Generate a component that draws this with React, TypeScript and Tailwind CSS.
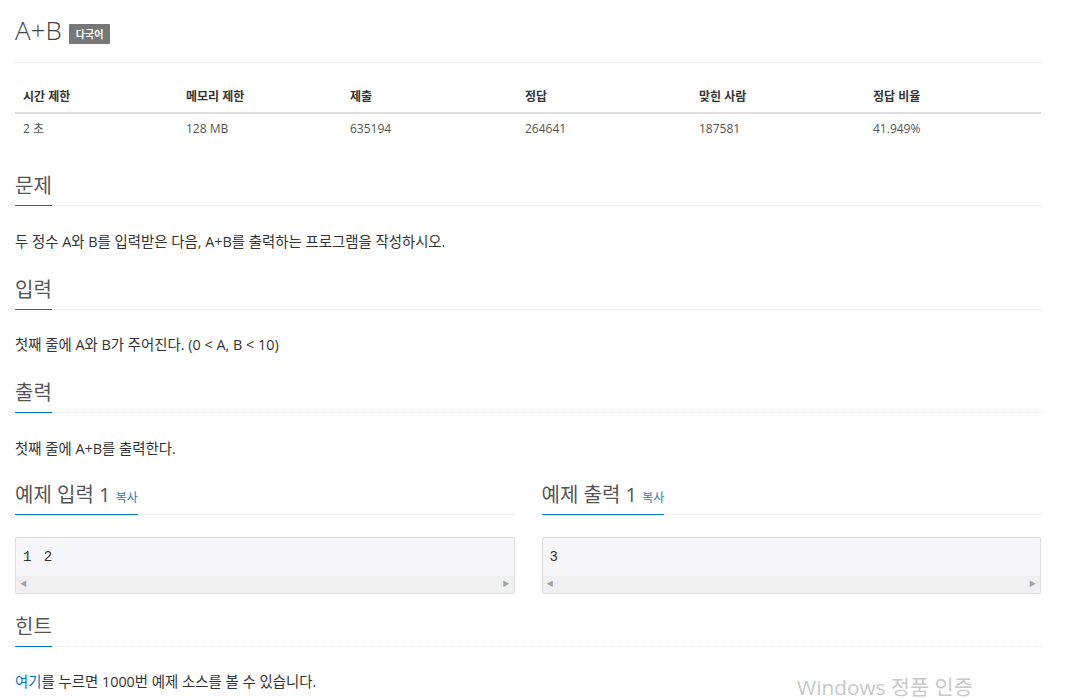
const font = "font-['Open_Sans','Noto_Sans_CJK_KR',sans-serif]";

const stats = [
  { label: "시간 제한", value: "2 초", w: "w-[163px]" },
  { label: "메모리 제한", value: "128 MB", w: "w-[164px]" },
  { label: "제출", value: "635194", w: "w-[175px]" },
  { label: "정답", value: "264641", w: "w-[174px]" },
  { label: "맞힌 사람", value: "187581", w: "w-[174px]" },
  { label: "정답 비율", value: "41.949%", w: "w-[176px]" },
];

function Headline({ children }: { children: React.ReactNode }) {
  return (
    <div className="border-b border-dotted border-[#e5e5e5] leading-[24px]">
      <h2 className="-mb-px inline-block border-b border-[#0076c0] pb-[7px] pt-[1px] text-[20px] font-normal leading-[24px] text-[#555]">
        {children}
      </h2>
    </div>
  );
}

function Section({ title, children }: { title: string; children: React.ReactNode }) {
  return (
    <section className="mt-[25px] first:mt-0">
      <Headline>{title}</Headline>
      <p className="mt-[25.5px] text-[14.4px] leading-[20px] text-[#333]">{children}</p>
    </section>
  );
}

function SampleBox({ title, data }: { title: string; data: string }) {
  return (
    <div>
      <Headline>
        {title} <span className="text-[12px] leading-none text-[#337ab7]">복사</span>
      </Headline>
      <div className="mt-[22px] rounded-[2px] border border-[#ddd] bg-[#f7f7f9]">
        <pre className="h-[38px] px-[7px] pt-[9px] font-['Liberation_Mono',monospace] text-[14px] leading-[20px] text-[#333] [word-spacing:4px]">
          {data}
        </pre>
        <div className="flex h-[17px] items-center justify-between bg-[#f0f0f0] px-[4px] text-[7px] text-[#a3a3a3]">
          <span>◀</span>
          <span>▶</span>
        </div>
      </div>
    </div>
  );
}

export default function App() {
  return (
    <div className={`${font} relative h-[698px] overflow-hidden bg-white`}>
      <div className="w-[1056px] px-[15px]">
        <div className="flex items-center border-b border-[#eee] pb-[14px] pt-[12px]">
          <h1 className="text-[26px] font-light leading-[36px] text-[#444]">A+B</h1>
          <span className="ml-[7px] mt-[7px] inline-block h-[20px] rounded-[1px] bg-[#777] px-[7px] text-[10px] font-bold leading-[20px] text-white">
            다국어
          </span>
        </div>

        <table className="mt-[16px] w-full table-fixed border-collapse text-[12px] text-[#333]">
          <colgroup>
            {stats.map((s) => (
              <col key={s.label} className={s.w} />
            ))}
          </colgroup>
          <thead>
            <tr className="border-b-2 border-[#ddd]">
              {stats.map((s) => (
                <th key={s.label} className="px-[8px] pb-[6px] pt-[9px] text-left font-bold leading-[18px]">
                  {s.label}
                </th>
              ))}
            </tr>
          </thead>
          <tbody>
            <tr>
              {stats.map((s) => (
                <td key={s.label} className="px-[8px] pb-[8px] pt-[6px] leading-[18px] text-[#555]">
                  {s.value}
                </td>
              ))}
            </tr>
          </tbody>
        </table>

        <div className="mt-[27px]">
          <Section title="문제">두 정수 A와 B를 입력받은 다음, A+B를 출력하는 프로그램을 작성하시오.</Section>
          <Section title="입력">첫째 줄에 A와 B가 주어진다. (0 &lt; A, B &lt; 10)</Section>
          <Section title="출력">첫째 줄에 A+B를 출력한다.</Section>
        </div>

        <div className="mt-[23px] grid grid-cols-2 gap-x-[27px]">
          <SampleBox title="예제 입력 1" data="1 2" />
          <SampleBox title="예제 출력 1" data="3" />
        </div>

        <section className="mt-[20px]">
          <Headline>힌트</Headline>
          <p className="mt-[25.5px] text-[14.4px] leading-[20px] text-[#333]">
            <a className="text-[#0076c0]">여기</a>를 누르면 1000번 예제 소스를 볼 수 있습니다.
          </p>
        </section>
      </div>

      <div className="absolute left-[797px] top-[672px] text-[20.8px] text-[#c9c9c9]">Windows 정품 인증</div>
    </div>
  );
}
